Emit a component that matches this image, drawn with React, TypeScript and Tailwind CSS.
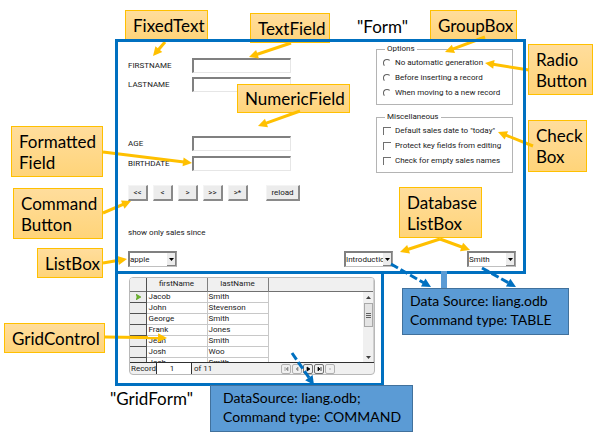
import type { ReactNode } from "react";

const FORM_FONT = "font-[Roboto,sans-serif]";

function Field({ id, label }: { id: string; label: string }) {
  return (
    <div className="flex h-[15px] items-center">
      <label htmlFor={id} className="w-16 whitespace-nowrap">
        {label}
      </label>
      <input
        id={id}
        type="text"
        className="h-[15px] w-[99px] border-t-2 border-r border-b border-l-2 border-t-[#808080] border-r-[#e6e6e6] border-b-[#e6e6e6] border-l-[#808080] bg-white px-1 outline-none"
      />
    </div>
  );
}

function Command({ children, wide }: { children: ReactNode; wide?: boolean }) {
  return (
    <button
      type="button"
      className={`h-4 border-t border-r-2 border-b-2 border-l border-t-[#f4f4f4] border-r-[#8a8a8a] border-b-[#8a8a8a] border-l-[#f4f4f4] bg-[#ececec] text-center leading-3 ${
        wide ? "ml-[13px] w-[34px]" : "w-5"
      }`}
    >
      {children}
    </button>
  );
}

function ListBox({ label, value }: { label: string; value: string }) {
  return (
    <div className="flex h-4 w-[49px] border-t-2 border-r border-b border-l-2 border-t-[#808080] border-r-[#a0a0a0] border-b-[#c0c0c0] border-l-[#808080] bg-white">
      <select aria-label={label} className="min-w-0 flex-1 appearance-none overflow-hidden bg-white outline-none">
        <option>{value}</option>
      </select>
      <span className="flex w-[9px] items-center justify-center border-r border-b border-[#808080] bg-[#ececec]">
        <svg width="5" height="3" viewBox="0 0 5 3" aria-hidden="true">
          <path d="M0 0h5L2.500 3z" fill="#000" />
        </svg>
      </span>
    </div>
  );
}

function Group({ legend, type, items }: { legend: string; type: "radio" | "checkbox"; items: string[] }) {
  const box =
    type === "radio"
      ? "size-2 rounded-full border border-t-[#606060] border-r-transparent border-b-transparent border-l-[#606060]"
      : "size-2 border-t border-l border-[#707070]";
  return (
    <fieldset className="h-[62px] border border-[#b4b4b4] pl-[6px]">
      <legend className="ml-[2px] px-[2px] leading-3">{legend}</legend>
      <div className="flex flex-col gap-[3px] pt-[2px]">
        {items.map((item) => (
          <label key={item} className="flex h-3 items-center gap-[4px] whitespace-nowrap">
            <input type={type} name={legend} className={`shrink-0 appearance-none bg-white ${box}`} />
            {item}
          </label>
        ))}
      </div>
    </fieldset>
  );
}

const people = [
  ["Jacob", "Smith"],
  ["John", "Stevenson"],
  ["George", "Smith"],
  ["Frank", "Jones"],
  ["Jean", "Smith"],
  ["Josh", "Woo"],
  ["Josh", "Smith"],
];

const navigation = [
  { name: "First record", d: "M3 2v4M6 2v4L4 4z", on: false },
  { name: "Previous record", d: "M5 2v4L3 4z", on: false },
  { name: "Next record", d: "M3 2v4l3-2z", on: true },
  { name: "Last record", d: "M3 2v4l2-2zM6 2v4", on: true },
  { name: "New record", d: "M3 4h2", on: false },
];

function Grid() {
  return (
    <div className="flex h-[98px] flex-col overflow-hidden rounded-sm border border-[#b8b8b8] bg-[#f0f0f0]">
      <div className="flex h-[86px] overflow-hidden border-b border-[#303030]">
        <div className="flex-1 overflow-hidden bg-white">
          <table className="w-full table-fixed border-collapse">
            <thead>
              <tr className="h-[13px] border-b border-[#707070] bg-[#f0f0f0] leading-3">
                <th className="w-4 border-r border-[#505050] p-0" aria-label="Current" />
                <th className="w-[61px] border-r border-[#808080] p-0 text-center font-normal">firstName</th>
                <th className="w-[61px] border-r border-[#808080] p-0 text-center font-normal">lastName</th>
                <th className="p-0" aria-label="Empty" />
              </tr>
            </thead>
            <tbody>
              {people.map(([first, last], i) => (
                <tr key={i} className="h-[11px] leading-[10px]">
                  <td className="border-r border-b border-[#505050] bg-[#ececec] p-0">
                    {i === 0 && (
                      <svg width="6" height="6" viewBox="0 0 6 6" className="ml-[6px]" aria-hidden="true">
                        <path d="M0 0L5 3L0 6L1 3z" fill="#6db52c" stroke="#4a9410" strokeWidth=".5" />
                      </svg>
                    )}
                  </td>
                  <td className="border-r border-b border-[#c8c8c8] p-0 pl-[2px]">{first}</td>
                  <td className="border-r border-b border-[#c8c8c8] p-0 pl-px">{last}</td>
                  <td className="p-0" />
                </tr>
              ))}
            </tbody>
          </table>
        </div>
        <div className="flex w-[11px] flex-col items-center border-r border-[#d0d0d0] bg-[#f0f0f0] pb-[3px]">
          <div className="h-[14px] w-full border-b border-[#707070]" />
          <svg className="mt-1" width="5" height="3" viewBox="0 0 5 3" aria-hidden="true">
            <path d="M0 3h5L2.500 0z" fill="#404040" />
          </svg>
          <div className="mt-1 mb-auto flex h-6 w-[9px] flex-col items-center justify-center gap-px border border-[#a8a8a8] bg-[#e4e4e4]">
            <span className="h-px w-[5px] bg-[#606060]" />
            <span className="h-px w-[5px] bg-[#606060]" />
            <span className="h-px w-[5px] bg-[#606060]" />
          </div>
          <svg width="5" height="3" viewBox="0 0 5 3" aria-hidden="true">
            <path d="M0 0h5L2.500 3z" fill="#404040" />
          </svg>
        </div>
      </div>
      <div className="flex h-[11px] items-center leading-[10px]">
        <label htmlFor="record" className="w-[26px] pl-px">
          Record
        </label>
        <input
          id="record"
          defaultValue="1"
          className="h-[11px] w-9 border-x border-[#303030] bg-white pr-1 text-center outline-none"
        />
        <span className="pl-[2px]">of 11</span>
        <div className="mr-[39px] ml-auto flex gap-px">
          {navigation.map(({ name, d, on }) => (
            <button
              key={name}
              type="button"
              aria-label={name}
              className={`flex size-[10px] items-center justify-center rounded-xs border ${
                on ? "border-[#707070] text-black" : "border-[#b0b0b0] text-[#909090]"
              }`}
            >
              <svg width="8" height="8" viewBox="0 0 8 8" aria-hidden="true">
                <path d={d} fill="currentColor" stroke="currentColor" strokeWidth=".7" />
              </svg>
            </button>
          ))}
        </div>
      </div>
    </div>
  );
}

const callouts = [
  { text: ["FixedText"], place: "left-[125px] top-[10px] w-[83px] h-[30px]" },
  { text: ["TextField"], place: "left-[250px] top-[13px] w-[80px] h-[30px]" },
  { text: ["GroupBox"], place: "left-[430px] top-[10px] w-[87px] h-[30px]" },
  { text: ["Radio", "Button"], place: "left-[528px] top-[44px] w-[65px] h-[51px]" },
  { text: ["Check", "Box"], place: "left-[528px] top-[120px] w-[59px] h-[52px]" },
  { text: ["NumericField"], place: "left-[237px] top-[84px] w-[113px] h-[29px]" },
  { text: ["Formatted", "Field"], place: "left-[11px] top-[126px] w-[92px] h-[51px]" },
  { text: ["Command", "Button"], place: "left-[13px] top-[188px] w-[90px] h-[51px]" },
  { text: ["ListBox"], place: "left-[37px] top-[248px] w-[66px] h-[30px]" },
  { text: ["Database", "ListBox"], place: "left-[399px] top-[187px] w-[83px] h-[51px]" },
  { text: ["GridControl"], place: "left-[4px] top-[323px] w-[101px] h-[30px]" },
];

type Line = [number, number, number, number];

const calloutArrows: Line[] = [
  [165, 42, 153, 56],
  [291, 43, 249, 57],
  [300, 111, 258, 126],
  [485, 37, 445, 52],
  [529, 70, 485, 63],
  [533, 146, 498, 132],
  [440, 239, 400, 252],
  [440, 239, 470, 250],
  [103, 152, 192, 163],
  [103, 213, 131, 201],
  [103, 263, 127, 259],
  [105, 337, 167, 338],
];

const sourceArrows: Line[] = [
  [391, 264, 431, 287],
  [482, 268, 516, 287],
  [292, 353, 314, 385],
];

function Arrows({ lines, color, dash, layer }: { lines: Line[]; color: string; dash?: string; layer: string }) {
  return (
    <svg
      width="606"
      height="442"
      viewBox="0 0 606 442"
      aria-hidden="true"
      className={`pointer-events-none absolute top-0 left-0 ${layer}`}
    >
      {lines.map(([x1, y1, x2, y2]) => {
        const length = Math.hypot(x2 - x1, y2 - y1);
        const ux = (x2 - x1) / length;
        const uy = (y2 - y1) / length;
        const bx = x2 - ux * 9;
        const by = y2 - uy * 9;
        return (
          <g key={`${x1}-${y1}-${x2}`}>
            <line x1={x1} y1={y1} x2={bx + ux} y2={by + uy} stroke={color} strokeWidth="3" strokeDasharray={dash} />
            <polygon
              points={`${x2},${y2} ${bx - uy * 4.500},${by + ux * 4.500} ${bx + uy * 4.500},${by - ux * 4.500}`}
              fill={color}
            />
          </g>
        );
      })}
    </svg>
  );
}

function Source({ lines, place }: { lines: string[]; place: string }) {
  return (
    <div
      className={`absolute z-20 h-[47px] border border-[#41719c] bg-[#5b9bd5] pt-[2px] text-[14px] leading-[19px] whitespace-nowrap ${place}`}
    >
      {lines.map((line) => (
        <p key={line}>{line}</p>
      ))}
    </div>
  );
}

export default function App() {
  return (
    <main className="relative min-h-screen bg-white pt-[39px] pr-20 pl-[115px] font-[Lato,sans-serif] text-black">
      <section aria-label="Form" className="relative">
        <div className={`flex min-h-[235px] flex-col px-[13px] pt-1 text-[8px] text-[#202020] ${FORM_FONT}`}>
          <div className="flex justify-between">
            <div className="flex flex-col pt-[15px]">
              <div className="flex flex-col gap-1">
                <Field id="first" label="FIRSTNAME" />
                <Field id="last" label="LASTNAME" />
              </div>
              <div className="mt-11 flex flex-col gap-[5px]">
                <Field id="age" label="AGE" />
                <Field id="birth" label="BIRTHDATE" />
              </div>
              <div className="mt-[14px] flex gap-[5px]">
                <Command>{"<<"}</Command>
                <Command>{"<"}</Command>
                <Command>{">"}</Command>
                <Command>{">>"}</Command>
                <Command>{">*"}</Command>
                <Command wide>reload</Command>
              </div>
            </div>
            <div className="flex w-[137px] flex-col gap-[6px]">
              <Group
                legend="Options"
                type="radio"
                items={["No automatic generation", "Before inserting a record", "When moving to a new record"]}
              />
              <Group
                legend="Miscellaneous"
                type="checkbox"
                items={['Default sales date to "today"', "Protect key fields from editing", "Check for empty sales names"]}
              />
            </div>
          </div>
          <p className="mt-[26px] leading-3">show only sales since</p>
          <div className="mt-3 flex">
            <ListBox label="Product" value="apple" />
            <div className="-mr-[3px] ml-auto flex gap-[74px]">
              <ListBox label="Category" value="Introduction" />
              <ListBox label="Name" value="Smith" />
            </div>
          </div>
        </div>
        <div className="pointer-events-none absolute inset-0 z-20 border-3 border-[#0070c0]" />
      </section>

      <section aria-label="GridForm" className="relative -mt-[3px] w-[269px]">
        <div className={`pt-[6px] pr-[9px] pb-[11px] pl-[14px] text-[8px] text-[#202020] ${FORM_FONT}`}>
          <Grid />
        </div>
        <div className="pointer-events-none absolute inset-0 z-20 border-3 border-[#0070c0]" />
      </section>

      {callouts.map(({ text, place }) => (
        <div
          key={text.join(" ")}
          className={`absolute z-10 flex flex-col justify-center border border-[#ffc000] bg-linear-to-b from-[#ffdd9c] to-[#ffd479] pl-[7px] text-[17px] leading-[21px] whitespace-nowrap ${place}`}
        >
          {text.map((line) => (
            <p key={line}>{line}</p>
          ))}
        </div>
      ))}
      <h2 className="absolute top-[16px] left-[357px] text-[17px] leading-[21px]">"Form"</h2>
      <h2 className="absolute top-[388px] left-[110px] text-[17px] leading-[21px]">"GridForm"</h2>

      <div className="absolute top-[271px] left-[441px] z-20 h-[17px] w-[6px] bg-[#5b9bd5]" />
      <Source lines={["Data Source: liang.odb", "Command type: TABLE"]} place="left-[402px] top-[288px] w-[167px] pl-[7px]" />
      <Source lines={["DataSource: liang.odb;", "Command type: COMMAND"]} place="left-[210px] top-[385px] w-[203px] pl-3" />

      <Arrows lines={calloutArrows} color="#ffc000" layer="z-10" />
      <Arrows lines={sourceArrows} color="#0070c0" dash="8 3" layer="z-30" />
    </main>
  );
}
